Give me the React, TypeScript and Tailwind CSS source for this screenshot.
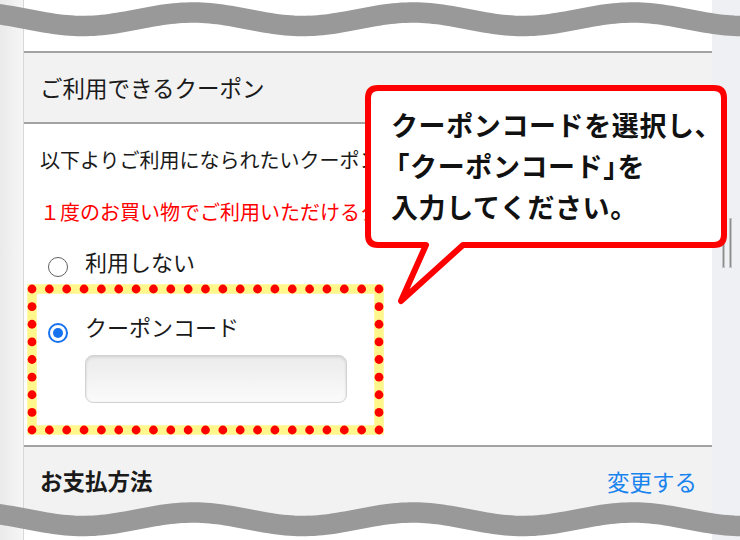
import React from 'react';

// sine wave used for the torn top / bottom edges
function wavePath(offset: number) {
  const pts: string[] = [];
  for (let x = -10; x <= 750; x += 4) {
    const y = offset + 19.25 + 6.75 * Math.cos((2 * Math.PI * (x - 83)) / 220);
    pts.push(`${x === -10 ? 'M' : 'L'}${x} ${y.toFixed(2)}`);
  }
  return pts.join(' ');
}

function Dots() {
  const x1 = 32, x2 = 379, y1 = 289, y2 = 430;
  const dots: { x: number; y: number }[] = [];
  const nx = 20, ny = 8;
  for (let i = 0; i <= nx; i++) {
    const x = x1 + ((x2 - x1) * i) / nx;
    dots.push({ x, y: y1 }, { x, y: y2 });
  }
  for (let j = 1; j < ny; j++) {
    const y = y1 + ((y2 - y1) * j) / ny;
    dots.push({ x: x1, y }, { x: x2, y });
  }
  return (
    <svg className="absolute left-0 top-0 pointer-events-none" width={740} height={540}>
      <rect x={x1} y={y1} width={x2 - x1} height={y2 - y1} fill="none" stroke="#fff68c" strokeWidth={9.5} />
      {dots.map((d, i) => (
        <circle key={i} cx={d.x} cy={d.y} r={4.4} fill="#ff0000" />
      ))}
    </svg>
  );
}

function Radio({ checked }: { checked?: boolean }) {
  if (checked) {
    return (
      <span className="flex w-[20px] h-[20px] rounded-full border-2 border-[#1772ee] items-center justify-center shrink-0">
        <span className="block w-[10px] h-[10px] rounded-full bg-[#1772ee]" />
      </span>
    );
  }
  return <span className="block w-[20px] h-[20px] rounded-full border-[1.5px] border-[#5f5f5f] bg-white shrink-0" />;
}

export default function App() {
  return (
    <div className="relative w-[740px] h-[540px] overflow-hidden bg-white font-['Noto_Sans_CJK_JP','Noto_Sans_CJK_SC',sans-serif] text-[#1a1a1a]">
      <div className="flex h-full">
        {/* left page edge */}
        <div className="w-[24px] h-full bg-gradient-to-r from-[#eaeaea] to-[#f6f6f6] border-r border-[#d8d8d8]" />

        {/* main panel */}
        <div className="w-[688px] h-full flex flex-col bg-white">
          <div className="h-[51px] shrink-0" />
          <div className="h-[73px] shrink-0 border-t-2 border-b-2 border-[#a3a3a3] bg-[#f2f2f2] flex items-center pl-[16px] text-[22.5px] leading-none">
            ご利用できるクーポン
          </div>

          <div className="h-[321px] shrink-0 pt-[21px] pl-[16px]">
            {/* the callout covers the rest of these two lines */}
            <div className="w-[326px] overflow-hidden">
              <p className="text-[20px] leading-[30px] whitespace-nowrap">以下よりご利用になられたいクーポン</p>
              <p className="mt-[22px] text-[20px] leading-[30px] text-[#ff0000] whitespace-nowrap">１度のお買い物でご利用いただけるク</p>
            </div>

            <div className="mt-[19px] flex items-start pl-[8px]">
              <span className="block mt-[11px]"><Radio /></span>
              <span className="ml-[17px] text-[22px] leading-[30px]">利用しない</span>
            </div>

            <div className="mt-[34px] flex items-start pl-[8px]">
              <span className="block mt-[12px]"><Radio checked /></span>
              <div className="ml-[17px] flex flex-col">
                <span className="text-[22px] leading-[30px]">クーポンコード</span>
                <div className="mt-[14px] w-[262px] h-[48px] rounded-[8px] border border-[#d2d2d2] bg-gradient-to-b from-[#ebebeb] to-[#fbfbfb] shadow-[inset_0_1px_3px_rgba(0,0,0,0.12)]" />
              </div>
            </div>
          </div>

          <div className="h-[75px] shrink-0 border-t-2 border-[#a3a3a3] bg-[#f2f2f2] flex items-center justify-between pl-[16px] pr-[15px] pb-[7px]">
            <span className="text-[22.5px] font-bold leading-none">お支払方法</span>
            <span className="mt-[2px] text-[22.5px] leading-none text-[#1a84ee]">変更する</span>
          </div>
          <div className="flex-1 bg-white" />
        </div>

        {/* right gutter with scrollbar */}
        <div className="w-[28px] h-full bg-[#eef0f3] flex gap-[4px] pl-[10px] pt-[218px]">
          <div className="w-[3px] h-[50px] bg-[#8c8c8c] border border-[#c4c4c4]" />
          <div className="w-[3px] h-[50px] bg-[#8c8c8c] border border-[#c4c4c4]" />
        </div>
      </div>

      <Dots />

      {/* callout */}
      <svg className="absolute left-0 top-0 pointer-events-none" width={740} height={540}>
        <path
          d="M378 88 H714 Q724 88 724 98 V235 Q724 245 714 245 H463 L401 301 L426 245 H378 Q368 245 368 235 V98 Q368 88 378 88 Z"
          fill="#ffffff"
          stroke="#ff0000"
          strokeWidth={6}
          strokeLinejoin="round"
        />
      </svg>
      <div className="absolute left-[391px] top-[104px] text-[27px] tracking-[0.6px] font-bold leading-[41px] text-[#111] whitespace-nowrap">
        <div>クーポンコードを選択し、</div>
        <div className="ml-[5px] [font-feature-settings:'halt']">「クーポンコード」を</div>
        <div>入力してください。</div>
      </div>

      {/* torn edges */}
      <svg className="absolute left-0 top-0 pointer-events-none" width={740} height={540}>
        <path d={wavePath(0)} fill="none" stroke="#999999" strokeWidth={20.5} />
        <path d={wavePath(500)} fill="none" stroke="#999999" strokeWidth={20.5} />
      </svg>
    </div>
  );
}
